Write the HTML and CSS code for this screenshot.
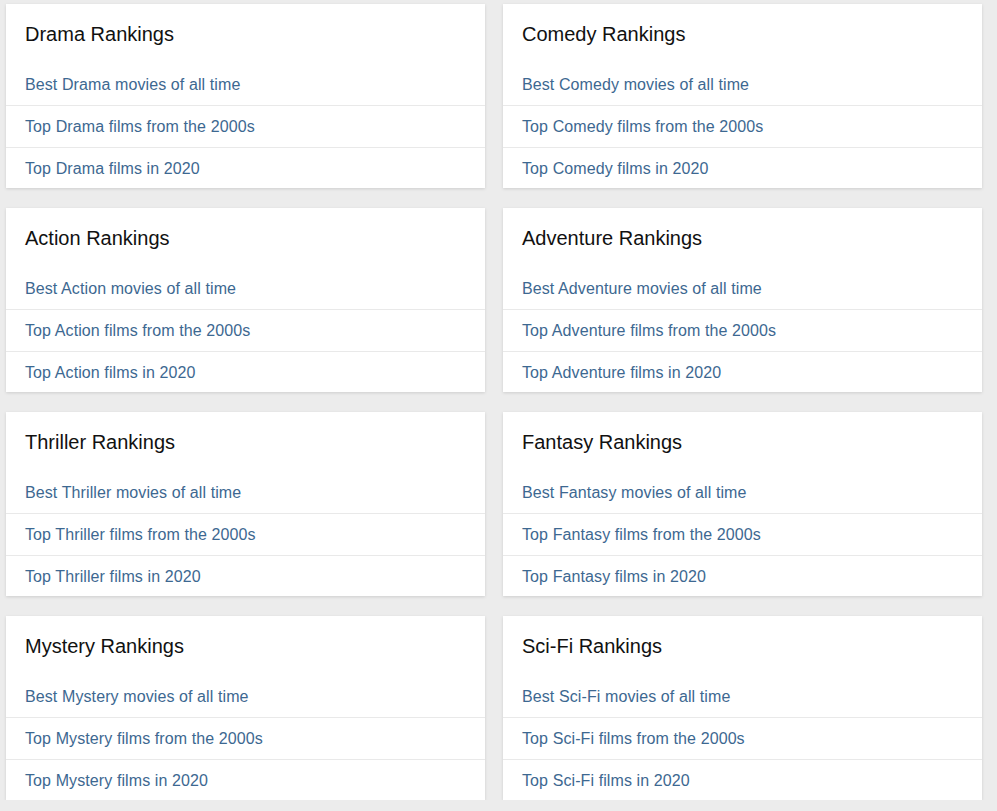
FILE: index.html
```html
<!DOCTYPE html>
<html lang="en">
<head>
    <meta charset="UTF-8">
    <meta name="viewport" content="width=device-width, initial-scale=1.0">
    <title>Genre Rankings</title>
    <link rel="stylesheet" href="styles.css">
</head>
<body>
    <div class="rankings">
        <div class="card">
            <h2>Drama Rankings</h2>
            <a href="#">Best Drama movies of all time</a>
            <a href="#">Top Drama films from the 2000s</a>
            <a href="#">Top Drama films in 2020</a>
        </div>
        <div class="card">
            <h2>Comedy Rankings</h2>
            <a href="#">Best Comedy movies of all time</a>
            <a href="#">Top Comedy films from the 2000s</a>
            <a href="#">Top Comedy films in 2020</a>
        </div>
        <div class="card">
            <h2>Action Rankings</h2>
            <a href="#">Best Action movies of all time</a>
            <a href="#">Top Action films from the 2000s</a>
            <a href="#">Top Action films in 2020</a>
        </div>
        <div class="card">
            <h2>Adventure Rankings</h2>
            <a href="#">Best Adventure movies of all time</a>
            <a href="#">Top Adventure films from the 2000s</a>
            <a href="#">Top Adventure films in 2020</a>
        </div>
        <div class="card">
            <h2>Thriller Rankings</h2>
            <a href="#">Best Thriller movies of all time</a>
            <a href="#">Top Thriller films from the 2000s</a>
            <a href="#">Top Thriller films in 2020</a>
        </div>
        <div class="card">
            <h2>Fantasy Rankings</h2>
            <a href="#">Best Fantasy movies of all time</a>
            <a href="#">Top Fantasy films from the 2000s</a>
            <a href="#">Top Fantasy films in 2020</a>
        </div>
        <div class="card">
            <h2>Mystery Rankings</h2>
            <a href="#">Best Mystery movies of all time</a>
            <a href="#">Top Mystery films from the 2000s</a>
            <a href="#">Top Mystery films in 2020</a>
        </div>
        <div class="card">
            <h2>Sci-Fi Rankings</h2>
            <a href="#">Best Sci-Fi movies of all time</a>
            <a href="#">Top Sci-Fi films from the 2000s</a>
            <a href="#">Top Sci-Fi films in 2020</a>
        </div>
    </div>
</body>
</html>
```

FILE: styles.css
```css
body {
    margin: 0;
    background: #ececec;
    font-family: 'Liberation Sans', Arial, sans-serif;
}

.rankings {
    display: grid;
    grid-template-columns: 479px 479px;
    column-gap: 18px;
    row-gap: 20px;
    padding: 4px 0 0 6px;
}

.card {
    background: #fff;
    display: flex;
    flex-direction: column;
    box-shadow: 0 1px 3px rgba(0, 0, 0, 0.13);
}

.card h2 {
    margin: 0;
    padding: 20px 19px;
    font-size: 20px;
    line-height: 20px;
    font-weight: normal;
    color: #111;
}

.card a {
    display: block;
    padding: 11px 19px 10px;
    font-size: 16px;
    line-height: 20px;
    letter-spacing: 0.1px;
    color: #3d6891;
    text-decoration: none;
}

.card a + a {
    border-top: 1px solid #e9e9e9;
}

.card a:last-child {
    padding-bottom: 9px;
}
```
